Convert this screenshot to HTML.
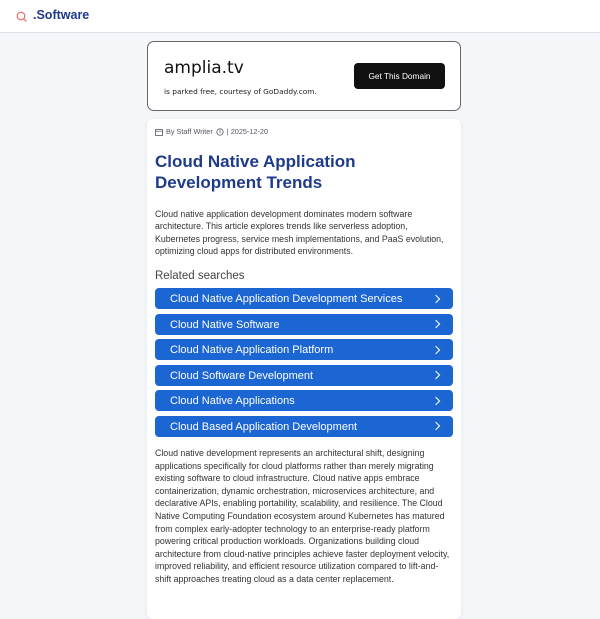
<!DOCTYPE html>
<html><head><style>
*{margin:0;padding:0;box-sizing:border-box}
body{width:600px;height:600px;overflow:hidden;background:#f4f6fa;font-family:"Liberation Sans",sans-serif}
.hdr{height:33px;background:#fff;border-bottom:1px solid #dde2ea;position:relative}
.hdr .logo{position:absolute;left:33px;top:8px;font-weight:bold;font-size:12.5px;color:#1e3a8a}
.hdr svg{position:absolute;left:16px;top:11px}
.dom{position:absolute;left:147px;top:41px;width:314px;height:70px;border:1px solid #666;border-radius:7px;background:#fff}
.dom h1{position:absolute;left:16px;top:16px;font-size:17px;font-weight:normal;color:#111;font-family:"DejaVu Sans",sans-serif}
.dom p{position:absolute;left:16px;top:45px;font-size:7.4px;color:#222;font-family:"DejaVu Sans",sans-serif}
.dom .btn{position:absolute;left:206px;top:21px;width:91px;height:26px;background:#111;color:#fff;border-radius:4px;font-size:8.3px;text-align:center;line-height:26px}
.card{position:absolute;left:147px;top:119px;width:314px;height:500px;background:#fff;border-radius:6px;box-shadow:0 1px 4px rgba(0,0,0,.08);padding:0 8px}
.meta{position:absolute;left:8px;top:8px;font-size:7.3px;color:#556;display:flex;align-items:center;gap:3px}
.t{position:absolute;left:8px;top:32px;font-size:17px;line-height:21px;font-weight:bold;color:#1e3a8a;width:300px}
.d{position:absolute;left:8px;top:89px;width:300px;font-size:8.8px;line-height:12.4px;color:#333}
.rs{position:absolute;left:8px;top:151px;font-size:11.5px;color:#444}
.b{position:absolute;left:8px;width:298px;height:21px;background:#1c66d4;border-radius:4px;color:#fff;font-size:11px;line-height:22px;padding-left:15px}
.b:after{content:"";position:absolute;right:14px;top:7.5px;width:5px;height:5px;border-top:1.3px solid #fff;border-right:1.3px solid #fff;transform:rotate(45deg)}
.p{position:absolute;left:8px;top:328px;width:296px;font-size:8.8px;line-height:12.6px;color:#333}
</style></head><body>
<div class="hdr"><svg width="12" height="12" viewBox="0 0 12 12"><circle cx="5" cy="5" r="3.8" fill="none" stroke="#e86a6a" stroke-width="1.2"/><line x1="7.8" y1="7.8" x2="10.5" y2="10.5" stroke="#e86a6a" stroke-width="1.2"/></svg><div class="logo">.Software</div></div>
<div class="dom"><h1>amplia.tv</h1><p>is parked free, courtesy of GoDaddy.com.</p><div class="btn">Get This Domain</div></div>
<div class="card">
<div class="meta"><svg width="8" height="8" viewBox="0 0 8 8"><rect x="0.5" y="1.5" width="7" height="6" fill="none" stroke="#556" stroke-width=".8"/><line x1="0.5" y1="3.2" x2="7.5" y2="3.2" stroke="#556" stroke-width=".7"/></svg> By Staff Writer <svg width="8" height="8" viewBox="0 0 8 8"><circle cx="4" cy="4" r="3.2" fill="none" stroke="#556" stroke-width=".8"/><path d="M4 2v2.3h1.3" fill="none" stroke="#556" stroke-width=".7"/></svg> | 2025-12-20</div>
<div class="t">Cloud Native Application Development Trends</div>
<div class="d">Cloud native application development dominates modern software architecture. This article explores trends like serverless adoption, Kubernetes progress, service mesh implementations, and PaaS evolution, optimizing cloud apps for distributed environments.</div>
<div class="rs">Related searches</div>
<div class="b" style="top:169px">Cloud Native Application Development Services</div>
<div class="b" style="top:194.5px">Cloud Native Software</div>
<div class="b" style="top:220px">Cloud Native Application Platform</div>
<div class="b" style="top:245.5px">Cloud Software Development</div>
<div class="b" style="top:271px">Cloud Native Applications</div>
<div class="b" style="top:296.5px">Cloud Based Application Development</div>
<div class="p">Cloud native development represents an architectural shift, designing applications specifically for cloud platforms rather than merely migrating existing software to cloud infrastructure. Cloud native apps embrace containerization, dynamic orchestration, microservices architecture, and declarative APIs, enabling portability, scalability, and resilience. The Cloud Native Computing Foundation ecosystem around Kubernetes has matured from complex early-adopter technology to an enterprise-ready platform powering critical production workloads. Organizations building cloud architecture from cloud-native principles achieve faster deployment velocity, improved reliability, and efficient resource utilization compared to lift-and-shift approaches treating cloud as a data center replacement.</div>
</div>
</body></html>
